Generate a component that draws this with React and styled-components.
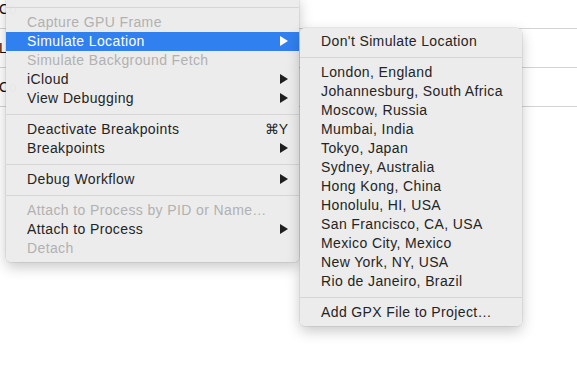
import styled, { createGlobalStyle } from "styled-components";

const GlobalStyle = createGlobalStyle`
	html, body {
		margin: 0;
		padding: 0;
		background: #ffffff;
		overflow: hidden;
	}
	body {
		font-family: "Liberation Sans", Arial, sans-serif;
		-webkit-font-smoothing: antialiased;
	}
`;

const debugItems = [
	{ type: "sep" },
	{ label: "Capture GPU Frame", disabled: true },
	{ label: "Simulate Location", arrow: true, active: true },
	{ label: "Simulate Background Fetch", disabled: true },
	{ label: "iCloud", arrow: true },
	{ label: "View Debugging", arrow: true },
	{ type: "sep" },
	{ label: "Deactivate Breakpoints", shortcut: "⌘Y" },
	{ label: "Breakpoints", arrow: true },
	{ type: "sep" },
	{ label: "Debug Workflow", arrow: true },
	{ type: "sep" },
	{ label: "Attach to Process by PID or Name…", disabled: true },
	{ label: "Attach to Process", arrow: true },
	{ label: "Detach", disabled: true },
];

const locationItems = [
	{ label: "Don't Simulate Location" },
	{ type: "sep" },
	{ label: "London, England" },
	{ label: "Johannesburg, South Africa" },
	{ label: "Moscow, Russia" },
	{ label: "Mumbai, India" },
	{ label: "Tokyo, Japan" },
	{ label: "Sydney, Australia" },
	{ label: "Hong Kong, China" },
	{ label: "Honolulu, HI, USA" },
	{ label: "San Francisco, CA, USA" },
	{ label: "Mexico City, Mexico" },
	{ label: "New York, NY, USA" },
	{ label: "Rio de Janeiro, Brazil" },
	{ type: "sep" },
	{ label: "Add GPX File to Project…" },
];

// table behind the menus, only its left edge peeks out
const backgroundRows = ["Co", "Li", "Co"];

const Arrow = ({ light }) => (
	<svg width="8" height="10" viewBox="0 0 8 10">
		<polygon points="0,0 8,5 0,10" fill={light ? "#ffffff" : "#1f1f1f"} />
	</svg>
);

const MenuList = ({ items, ...rest }) => (
	<Menu {...rest}>
		{items.map((item, i) =>
			item.type === "sep" ? (
				<Separator key={i} />
			) : (
				<Item key={i} $active={item.active} $disabled={item.disabled}>
					<Label>{item.label}</Label>
					{item.shortcut && <Shortcut>{item.shortcut}</Shortcut>}
					{item.arrow && <Arrow light={item.active} />}
				</Item>
			)
		)}
	</Menu>
);

const App = () => {
	return (
		<>
			<GlobalStyle />
			<Page>
				<Table>
					{backgroundRows.map((row, i) => (
						<Row key={i}>{row}</Row>
					))}
				</Table>
				<Cascade>
					<MenuList items={debugItems} $main />
					<SubMenuWrap>
						<MenuList items={locationItems} />
					</SubMenuWrap>
				</Cascade>
			</Page>
		</>
	);
};

export default App;

const Page = styled.div`
	position: relative;
	width: 577px;
	height: 386px;
	overflow: hidden;
	background: #ffffff;
`;

const Table = styled.div`
	display: flex;
	flex-direction: column;
	margin-top: -10px;
`;

const Row = styled.div`
	height: 38px;
	display: flex;
	align-items: center;
	margin-left: -1px;
	border-bottom: 1px solid #d4d4d4;
	font-size: 14px;
	color: #111;
`;

const Cascade = styled.div`
	position: absolute;
	top: 0;
	left: 6px;
	display: flex;
	align-items: flex-start;
`;

const Menu = styled.div`
	width: ${(p) => (p.$main ? "293px" : "222px")};
	box-sizing: border-box;
	background: rgba(236, 236, 236, 0.98);
	border-radius: ${(p) => (p.$main ? "0 0 5px 5px" : "5px")};
	padding: ${(p) => (p.$main ? "5px 0 4px" : "4px 0")};
	margin-top: ${(p) => (p.$main ? "-4px" : "0")};
	box-shadow: 0 0 0 0.5px rgba(0, 0, 0, 0.12), 0 5px 14px rgba(0, 0, 0, 0.22);
	display: flex;
	flex-direction: column;
`;

const SubMenuWrap = styled.div`
	margin-top: 28px;
	margin-left: 1px;
`;

const Item = styled.div`
	height: 19px;
	display: flex;
	align-items: center;
	padding: 0 11px 1px 21px;
	box-sizing: border-box;
	font-size: 14px;
	letter-spacing: 0.38px;
	color: ${(p) => (p.$active ? "#ffffff" : p.$disabled ? "#b1b1b1" : "#242424")};
	background: ${(p) => (p.$active ? "#3180f0" : "transparent")};
	white-space: nowrap;
`;

const Label = styled.span`
	flex: 1;
`;

const Shortcut = styled.span`
	color: #242424;
	font-size: 14px;
	letter-spacing: 0;
`;

const Separator = styled.div`
	height: 12px;
	display: flex;
	align-items: center;
	&::after {
		content: "";
		flex: 1;
		height: 1px;
		background: #d6d6d6;
	}
`;
